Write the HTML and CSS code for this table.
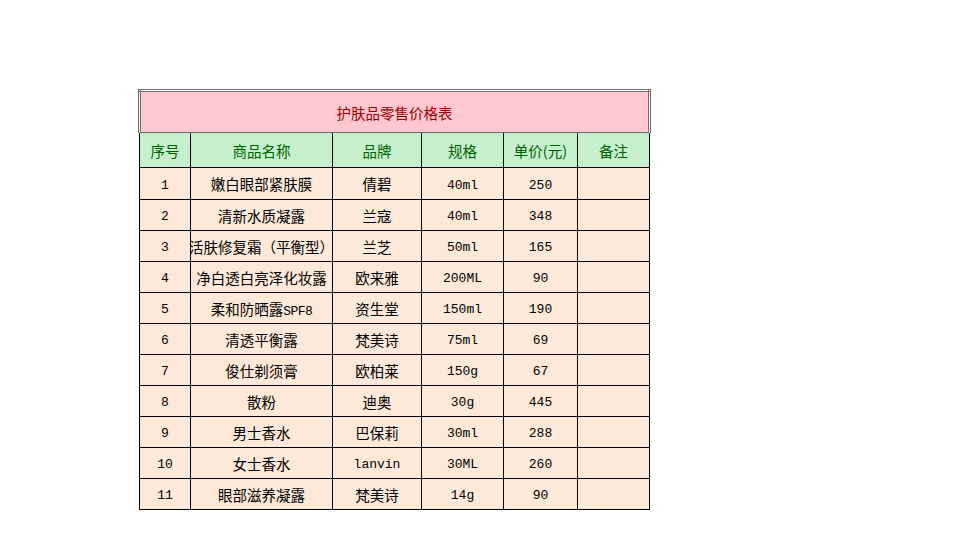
FILE: index.html
```html
<!DOCTYPE html>
<html lang="zh">
<head>
<meta charset="utf-8">
<title>护肤品零售价格表</title>
<link rel="stylesheet" href="styles.css">
</head>
<body>
<table class="sheet">
  <colgroup>
    <col class="c1"><col class="c2"><col class="c3"><col class="c4"><col class="c5"><col class="c6">
  </colgroup>
  <thead>
    <tr class="title-row"><th colspan="6" class="title">护肤品零售价格表</th></tr>
    <tr class="head-row">
      <th>序号</th><th>商品名称</th><th>品牌</th><th>规格</th><th>单价(元)</th><th>备注</th>
    </tr>
  </thead>
  <tbody>
    <tr class="first"><td class="num">1</td><td><div class="fit">嫩白眼部紧肤膜</div></td><td>倩碧</td><td class="num">40ml</td><td class="num">250</td><td></td></tr>
    <tr><td class="num">2</td><td><div class="fit">清新水质凝露</div></td><td>兰寇</td><td class="num">40ml</td><td class="num">348</td><td></td></tr>
    <tr><td class="num">3</td><td><div class="fit">活肤修复霜（平衡型）</div></td><td>兰芝</td><td class="num">50ml</td><td class="num">165</td><td></td></tr>
    <tr><td class="num">4</td><td><div class="fit">净白透白亮泽化妆露</div></td><td>欧来雅</td><td class="num">200ML</td><td class="num">90</td><td></td></tr>
    <tr><td class="num">5</td><td><div class="fit">柔和防晒露<span class="lat">SPF8</span></div></td><td>资生堂</td><td class="num">150ml</td><td class="num">190</td><td></td></tr>
    <tr><td class="num">6</td><td><div class="fit">清透平衡露</div></td><td>梵美诗</td><td class="num">75ml</td><td class="num">69</td><td></td></tr>
    <tr><td class="num">7</td><td><div class="fit">俊仕剃须膏</div></td><td>欧柏莱</td><td class="num">150g</td><td class="num">67</td><td></td></tr>
    <tr><td class="num">8</td><td><div class="fit">散粉</div></td><td>迪奥</td><td class="num">30g</td><td class="num">445</td><td></td></tr>
    <tr><td class="num">9</td><td><div class="fit">男士香水</div></td><td>巴保莉</td><td class="num">30ml</td><td class="num">288</td><td></td></tr>
    <tr><td class="num">10</td><td><div class="fit">女士香水</div></td><td class="num">lanvin</td><td class="num">30ML</td><td class="num">260</td><td></td></tr>
    <tr><td class="num">11</td><td><div class="fit">眼部滋养凝露</div></td><td>梵美诗</td><td class="num">14g</td><td class="num">90</td><td></td></tr>
  </tbody>
</table>
</body>
</html>
```
FILE: styles.css
```css
html, body {
  margin: 0;
  padding: 0;
  background: #ffffff;
}

body {
  font-family: "Noto Sans CJK SC", "Noto Sans", sans-serif;
  font-size: 14.5px;
  color: #000000;
}

.sheet {
  margin: 89px 0 0 138px;
  border-collapse: collapse;
  table-layout: fixed;
  width: 512px;
}

.c1 { width: 51px; }
.c2 { width: 142px; }
.c3 { width: 89px; }
.c4 { width: 82px; }
.c5 { width: 74px; }
.c6 { width: 72px; }

.sheet th,
.sheet td {
  border: 1px solid #000000;
  padding: 0;
  text-align: center;
  vertical-align: middle;
  font-weight: normal;
  white-space: nowrap;
  overflow: hidden;
  line-height: normal;
}

.title-row { height: 42px; }

.sheet .title {
  background: #ffc7ce;
  color: #9c0006;
  border: 3px double #6e6e6e;
  border-bottom: 1px solid #6e6e6e;
}

.head-row { height: 35px; }

.head-row th {
  background: #c6efce;
  color: #006100;
}

.sheet tbody tr { height: 31px; }
.sheet tbody tr.first { height: 32px; }

.sheet tbody td {
  background: #fde9d9;
}

.fit {
  display: flex;
  justify-content: center;
  align-items: baseline;
}

.sheet td.num {
  padding-top: 3px;
}

.num,
.lat {
  font-family: "Liberation Mono", "DejaVu Sans Mono", monospace;
  font-size: 13px;
}

.lat {
  letter-spacing: -0.5px;
}
```
